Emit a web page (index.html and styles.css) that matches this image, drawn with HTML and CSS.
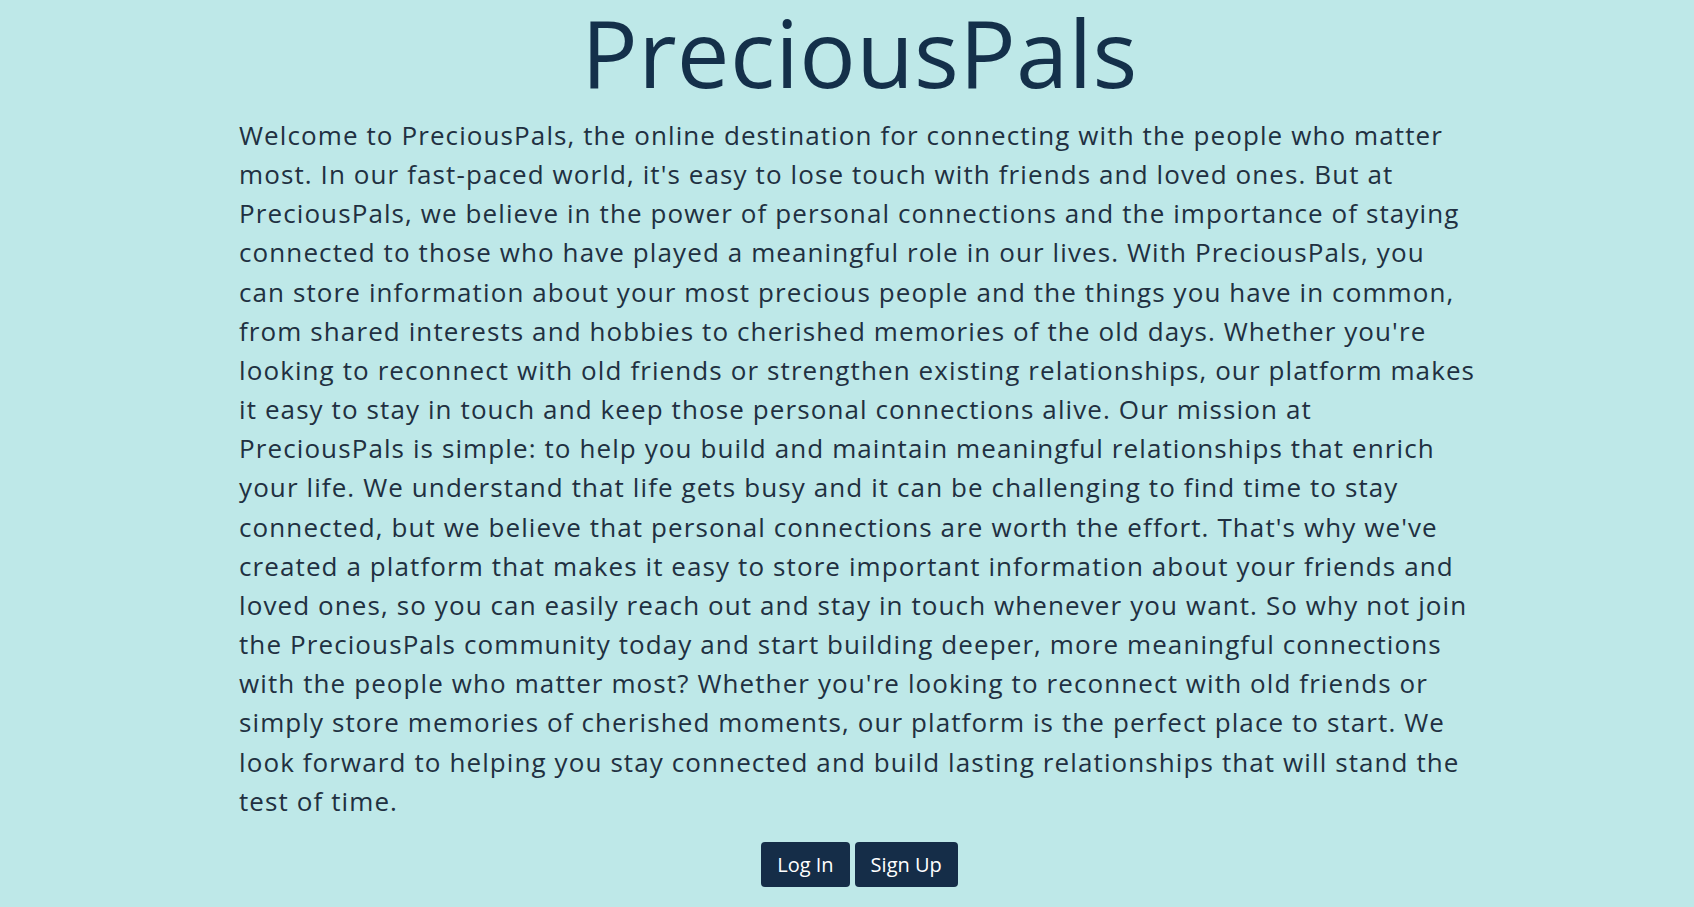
FILE: index.html
```
<!DOCTYPE html>
<html lang="en">
<head>
<meta charset="utf-8">
<title>PreciousPals</title>
<link rel="stylesheet" href="styles.css">
</head>
<body>
<main class="page">
  <h1 class="title">PreciousPals</h1>
  <p class="intro">Welcome to PreciousPals, the online destination for connecting with the people who matter<br>
most. In our fast-paced world, it's easy to lose touch with friends and loved ones. But at<br>
PreciousPals, we believe in the power of personal connections and the importance of staying<br>
connected to those who have played a meaningful role in our lives. With PreciousPals, you<br>
can store information about your most precious people and the things you have in common,<br>
from shared interests and hobbies to cherished memories of the old days. Whether you're<br>
looking to reconnect with old friends or strengthen existing relationships, our platform makes<br>
it easy to stay in touch and keep those personal connections alive. Our mission at<br>
PreciousPals is simple: to help you build and maintain meaningful relationships that enrich<br>
your life. We understand that life gets busy and it can be challenging to find time to stay<br>
connected, but we believe that personal connections are worth the effort. That's why we've<br>
created a platform that makes it easy to store important information about your friends and<br>
loved ones, so you can easily reach out and stay in touch whenever you want. So why not join<br>
the PreciousPals community today and start building deeper, more meaningful connections<br>
with the people who matter most? Whether you're looking to reconnect with old friends or<br>
simply store memories of cherished moments, our platform is the perfect place to start. We<br>
look forward to helping you stay connected and build lasting relationships that will stand the<br>
test of time.</p>
  <div class="actions">
    <button class="btn">Log In</button>
    <button class="btn">Sign Up</button>
  </div>
</main>
</body>
</html>
```
FILE: styles.css
```
html, body {
  margin: 0;
  padding: 0;
  background: #bee8e8;
}
body {
  font-family: "Open Sans", "Noto Sans", sans-serif;
  color: #1f2e3e;
  height: 907px;
  overflow: hidden;
}
.page {
  display: flex;
  flex-direction: column;
  align-items: center;
  padding: 0 190px 0 239px;
}
.title {
  margin: 0;
  font-size: 94px;
  font-weight: 500;
  line-height: 104px;
  color: #14304a;
  letter-spacing: 0.3px;
  transform: translateX(-12px);
}
.intro {
  align-self: stretch;
  margin: 0;
  padding-top: 12px;
  font-size: 26px;
  line-height: 39.15px;
  letter-spacing: 1.1px;
  color: #213041;
}
.actions {
  display: flex;
  gap: 5px;
  margin-top: 21px;
  transform: translateX(-12px);
}
.btn {
  font-family: "Open Sans", sans-serif;
  font-size: 20px;
  color: #ffffff;
  background: #152d48;
  border: none;
  border-radius: 4px;
  height: 45px;
  padding: 0 16px;
  cursor: pointer;
}
```
